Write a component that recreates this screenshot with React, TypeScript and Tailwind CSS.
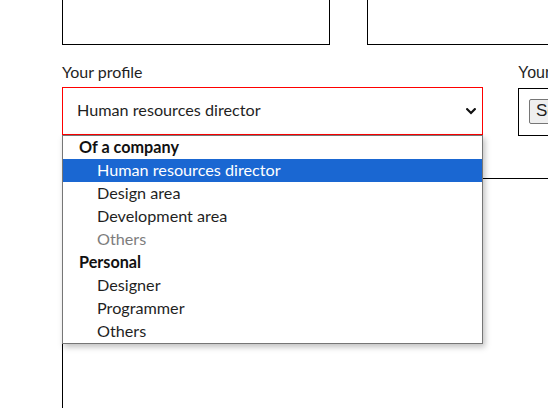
import React from "react";

const font = { fontFamily: "Lato, 'Noto Sans', sans-serif" };
const arial = { fontFamily: "'Liberation Sans', Arial, sans-serif" };

type Row = { label: string; kind: "group" | "opt" | "disabled" | "selected" };
const rows: Row[] = [
  { label: "Of a company", kind: "group" },
  { label: "Human resources director", kind: "selected" },
  { label: "Design area", kind: "opt" },
  { label: "Development area", kind: "opt" },
  { label: "Others", kind: "disabled" },
  { label: "Personal", kind: "group" },
  { label: "Designer", kind: "opt" },
  { label: "Programmer", kind: "opt" },
  { label: "Others", kind: "opt" },
];

export default function App() {
  return (
    <div className="relative w-[548px] h-[408px] overflow-hidden bg-white text-[#1f1f1f]" style={font}>
      {/* top boxes */}
      <div className="flex h-[45px]">
        <div className="ml-[62px] w-[268px] shrink-0 border border-t-0 border-black" />
        <div className="ml-[37px] min-w-0 flex-1 border border-t-0 border-r-0 border-black" />
      </div>

      <div className="flex">
        {/* left column */}
        <div className="ml-[62px] w-[421px] shrink-0">
          <div className="mt-[14px] h-[28px] text-[16px] leading-[25px]">Your profile</div>
          <div className="h-[48px] border border-[#ff0000] flex items-center pl-[14px] pr-[6px] text-[16.2px]">
            <span className="flex-1 mb-[2px]">Human resources director</span>
            <svg width="10" height="7" viewBox="0 0 10 7" className="mt-[1px]">
              <path d="M1.2 1.2 L5 5 L8.8 1.2" stroke="#111" strokeWidth="2.2" fill="none" strokeLinecap="square" />
            </svg>
          </div>
        </div>
        {/* right column */}
        <div className="ml-[35px] min-w-0 flex-1 overflow-hidden">
          <div className="mt-[16px] h-[27px] text-[16px] leading-[24px] whitespace-nowrap" style={arial}>
            Your
          </div>
          <div className="h-[48px] border border-r-0 border-black pl-[10px] pt-[10px]">
            <div
              className="h-[25px] w-[60px] rounded-[2px] border border-[#767676] bg-[#efefef] px-[6px] text-[17px] leading-[22px]"
              style={arial}
            >
              Select
            </div>
          </div>
        </div>
      </div>

      {/* lower box */}
      <div className="mt-[42px] ml-[62px] h-[300px] border-l border-t border-black" />

      {/* open dropdown */}
      <div className="absolute left-[62px] top-[135px] w-[421px] border border-[#767676] bg-white shadow-[2px_3px_6px_rgba(0,0,0,0.25)]">
        {rows.map((r, i) => (
          <div
            key={i}
            className={
              "h-[23px] leading-[21px] text-[16.2px] whitespace-nowrap " +
              (r.kind === "group"
                ? "pl-[16px] font-bold text-[#111]"
                : r.kind === "selected"
                ? "pl-[34px] bg-[#1a67d2] text-white"
                : r.kind === "disabled"
                ? "pl-[34px] text-[#7d7d7d]"
                : "pl-[34px] text-[#1f1f1f]")
            }
          >
            {r.label}
          </div>
        ))}
      </div>
    </div>
  );
}
